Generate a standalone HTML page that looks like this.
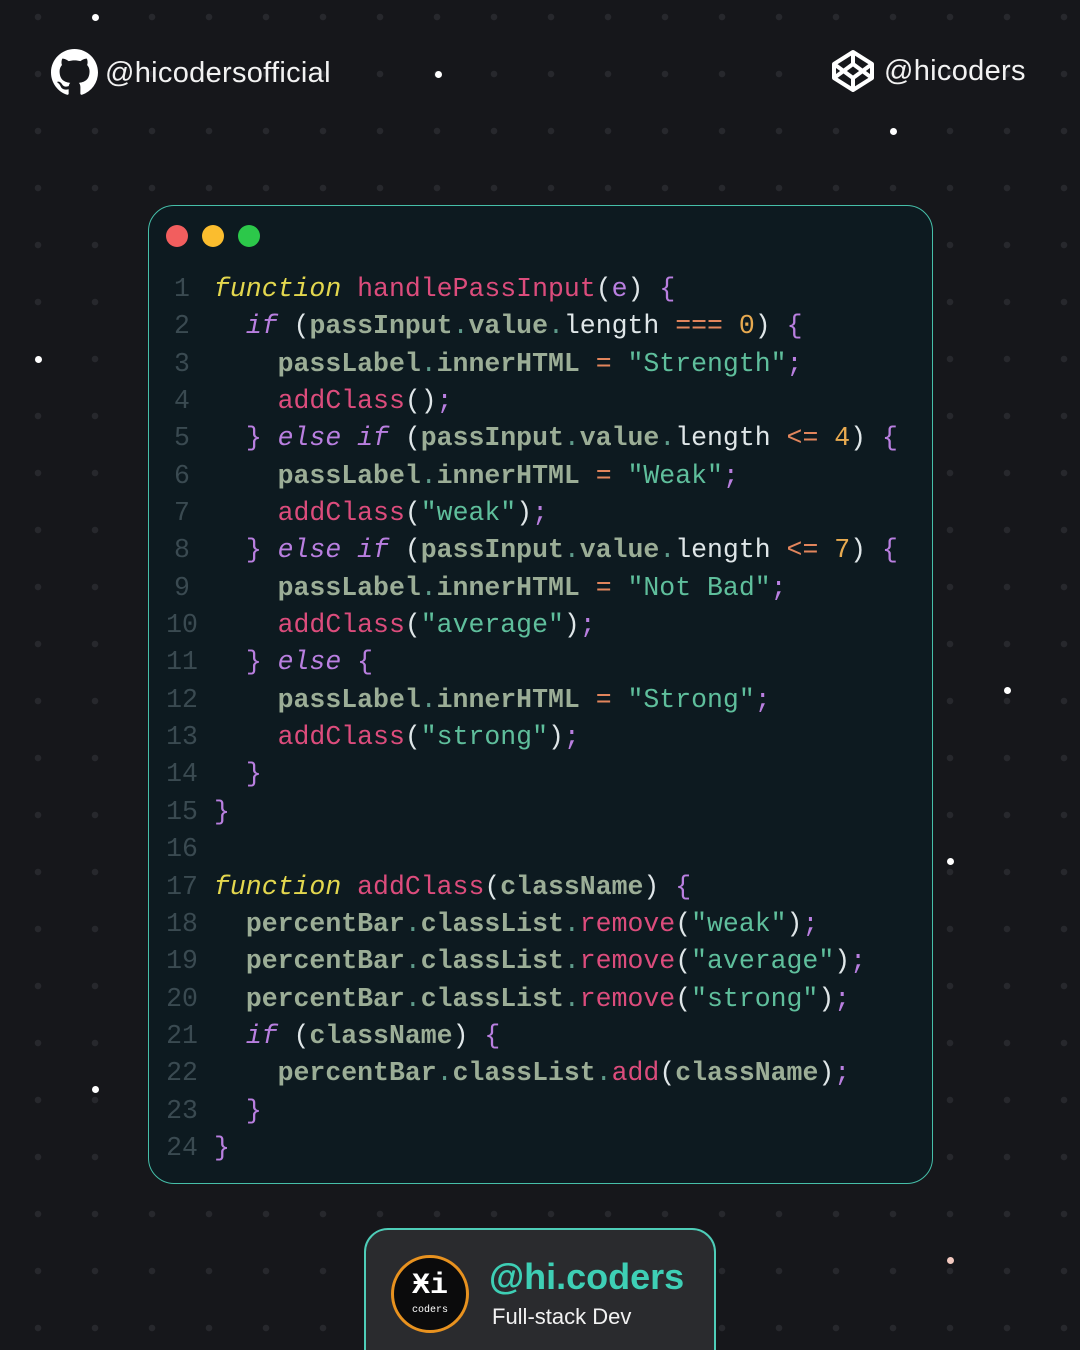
<!DOCTYPE html>
<html><head><meta charset="utf-8"><style>
*{margin:0;padding:0;box-sizing:border-box}
html,body{width:1080px;height:1350px;overflow:hidden}
body{background:#16171b;font-family:"Liberation Sans",sans-serif}
#wrap{position:relative;width:1080px;height:1350px;overflow:hidden}
.grid{position:absolute;inset:0;background-image:radial-gradient(circle,#27282d 3px,transparent 3.5px);background-size:57px 57px;background-position:9.5px -11.5px}
.star{position:absolute;width:7px;height:7px;border-radius:50%;background:#fff}
.hdr{position:absolute;color:#f2f2f2;font-size:29px;letter-spacing:.3px}
.card{position:absolute;left:148px;top:205px;width:785px;height:979px;border:1.5px solid #46bfa9;border-radius:26px;background:#0d1a20}
.dot{position:absolute;top:19px;width:22px;height:22px;border-radius:50%}
.code{position:absolute;left:16px;top:65px;font-family:"Liberation Mono",monospace;font-size:26.5px;line-height:37.35px;white-space:pre;color:#dfe6e8}
.ln{display:inline-block;width:34px;text-align:center;color:#3a4a51;margin-right:15px}
.k{color:#e3d74e;font-style:italic}
.p{color:#b97fe0;font-style:italic}
.f{color:#dc4c7c}
.v{color:#9bad96;font-weight:bold}
.d{color:#5d9a8a}
.o{color:#e2855c}
.s{color:#5fbf9c}
.n{color:#e8aa50}
.b{color:#b97fe0}
.w{color:#dfe6e8}
.foot{position:absolute;left:364px;top:1228px;width:352px;height:160px;border:2px solid #4ecdb8;border-radius:24px;background:#2a2b2e}
</style></head><body><div id="wrap">
<div class="grid"></div>
<div class="star" style="left:92px;top:14px"></div>
<div class="star" style="left:435px;top:71px"></div>
<div class="star" style="left:890px;top:128px"></div>
<div class="star" style="left:35px;top:356px"></div>
<div class="star" style="left:1004px;top:687px"></div>
<div class="star" style="left:947px;top:858px"></div>
<div class="star" style="left:92px;top:1086px"></div>
<div class="star" style="left:947px;top:1257px;background:#f2c9c0"></div>

<svg style="position:absolute;left:51px;top:49px" width="47" height="47" viewBox="0 0 16 16"><path fill="#fff" d="M8 0C3.58 0 0 3.58 0 8c0 3.54 2.29 6.53 5.47 7.59.4.07.55-.17.55-.38 0-.19-.01-.82-.01-1.49-2.01.37-2.53-.49-2.69-.94-.09-.23-.48-.94-.82-1.13-.28-.15-.68-.52-.01-.53.63-.01 1.08.58 1.23.82.72 1.21 1.87.87 2.33.66.07-.52.28-.87.51-1.07-1.78-.2-3.64-.89-3.64-3.95 0-.87.31-1.59.82-2.15-.08-.2-.36-1.02.08-2.12 0 0 .67-.21 2.2.82.64-.18 1.32-.27 2-.27.68 0 1.36.09 2 .27 1.53-1.04 2.2-.82 2.2-.82.44 1.1.16 1.92.08 2.12.51.56.82 1.27.82 2.15 0 3.07-1.87 3.75-3.65 3.95.29.25.54.73.54 1.48 0 1.07-.01 1.93-.01 2.2 0 .21.15.46.55.38A8.013 8.013 0 0016 8c0-4.42-3.58-8-8-8z"/></svg>
<div class="hdr" style="left:105px;top:57px">@hicodersofficial</div>
<svg style="position:absolute;left:831px;top:49px" width="44" height="44" viewBox="0 0 44 44" fill="none" stroke="#fff" stroke-width="4" stroke-linejoin="round"><path d="M22 3L41 15V29L22 41L3 29V15Z"/><path d="M22 3V15M22 29V41M3 15L22 29L41 15M3 29L22 15L41 29"/></svg>
<div class="hdr" style="left:884px;top:55px">@hicoders</div>

<div class="card">
<div class="dot" style="left:17px;background:#f25e5e"></div>
<div class="dot" style="left:53px;background:#fbbd2e"></div>
<div class="dot" style="left:89px;background:#2cc84a"></div>
<div class="code"><span class="ln">1</span><span class="k">function</span> <span class="f">handlePassInput</span><span class="w">(</span><span class="b">e</span><span class="w">)</span> <span class="b">{</span>
<span class="ln">2</span>  <span class="p">if</span> <span class="w">(</span><span class="v">passInput</span><span class="d">.</span><span class="v">value</span><span class="d">.</span>length <span class="o">===</span> <span class="n">0</span>) <span class="b">{</span>
<span class="ln">3</span>    <span class="v">passLabel</span><span class="d">.</span><span class="v">innerHTML</span> <span class="o">=</span> <span class="s">"Strength"</span><span class="b">;</span>
<span class="ln">4</span>    <span class="f">addClass</span>()<span class="b">;</span>
<span class="ln">5</span>  <span class="b">}</span> <span class="p">else if</span> (<span class="v">passInput</span><span class="d">.</span><span class="v">value</span><span class="d">.</span>length <span class="o">&lt;=</span> <span class="n">4</span>) <span class="b">{</span>
<span class="ln">6</span>    <span class="v">passLabel</span><span class="d">.</span><span class="v">innerHTML</span> <span class="o">=</span> <span class="s">"Weak"</span><span class="b">;</span>
<span class="ln">7</span>    <span class="f">addClass</span>(<span class="s">"weak"</span>)<span class="b">;</span>
<span class="ln">8</span>  <span class="b">}</span> <span class="p">else if</span> (<span class="v">passInput</span><span class="d">.</span><span class="v">value</span><span class="d">.</span>length <span class="o">&lt;=</span> <span class="n">7</span>) <span class="b">{</span>
<span class="ln">9</span>    <span class="v">passLabel</span><span class="d">.</span><span class="v">innerHTML</span> <span class="o">=</span> <span class="s">"Not Bad"</span><span class="b">;</span>
<span class="ln">10</span>    <span class="f">addClass</span>(<span class="s">"average"</span>)<span class="b">;</span>
<span class="ln">11</span>  <span class="b">}</span> <span class="p">else</span> <span class="b">{</span>
<span class="ln">12</span>    <span class="v">passLabel</span><span class="d">.</span><span class="v">innerHTML</span> <span class="o">=</span> <span class="s">"Strong"</span><span class="b">;</span>
<span class="ln">13</span>    <span class="f">addClass</span>(<span class="s">"strong"</span>)<span class="b">;</span>
<span class="ln">14</span>  <span class="b">}</span>
<span class="ln">15</span><span class="b">}</span>
<span class="ln">16</span>
<span class="ln">17</span><span class="k">function</span> <span class="f">addClass</span>(<span class="v">className</span>) <span class="b">{</span>
<span class="ln">18</span>  <span class="v">percentBar</span><span class="d">.</span><span class="v">classList</span><span class="d">.</span><span class="f">remove</span>(<span class="s">"weak"</span>)<span class="b">;</span>
<span class="ln">19</span>  <span class="v">percentBar</span><span class="d">.</span><span class="v">classList</span><span class="d">.</span><span class="f">remove</span>(<span class="s">"average"</span>)<span class="b">;</span>
<span class="ln">20</span>  <span class="v">percentBar</span><span class="d">.</span><span class="v">classList</span><span class="d">.</span><span class="f">remove</span>(<span class="s">"strong"</span>)<span class="b">;</span>
<span class="ln">21</span>  <span class="p">if</span> (<span class="v">className</span>) <span class="b">{</span>
<span class="ln">22</span>    <span class="v">percentBar</span><span class="d">.</span><span class="v">classList</span><span class="d">.</span><span class="f">add</span>(<span class="v">className</span>)<span class="b">;</span>
<span class="ln">23</span>  <span class="b">}</span>
<span class="ln">24</span><span class="b">}</span></div>
</div>

<div class="foot">
<div style="position:absolute;left:25px;top:25px;width:78px;height:78px;border-radius:50%;background:#0b0b0c;border:3px solid #e8921f"></div>
<div style="position:absolute;left:25px;top:41px;width:78px;text-align:center;color:#fff;font-family:'Liberation Mono',monospace;font-weight:bold;font-size:30px;line-height:30px">Ӿi</div>
<div style="position:absolute;left:25px;top:75px;width:78px;text-align:center;color:#fff;font-family:'Liberation Mono',monospace;font-size:10px">coders</div>
<div style="position:absolute;left:123px;top:26px;color:#3ecfb5;font-weight:bold;font-size:36px">@hi.coders</div>
<div style="position:absolute;left:126px;top:74px;color:#f2f2f2;font-size:22px">Full-stack Dev</div>
</div>
</div></body></html>
